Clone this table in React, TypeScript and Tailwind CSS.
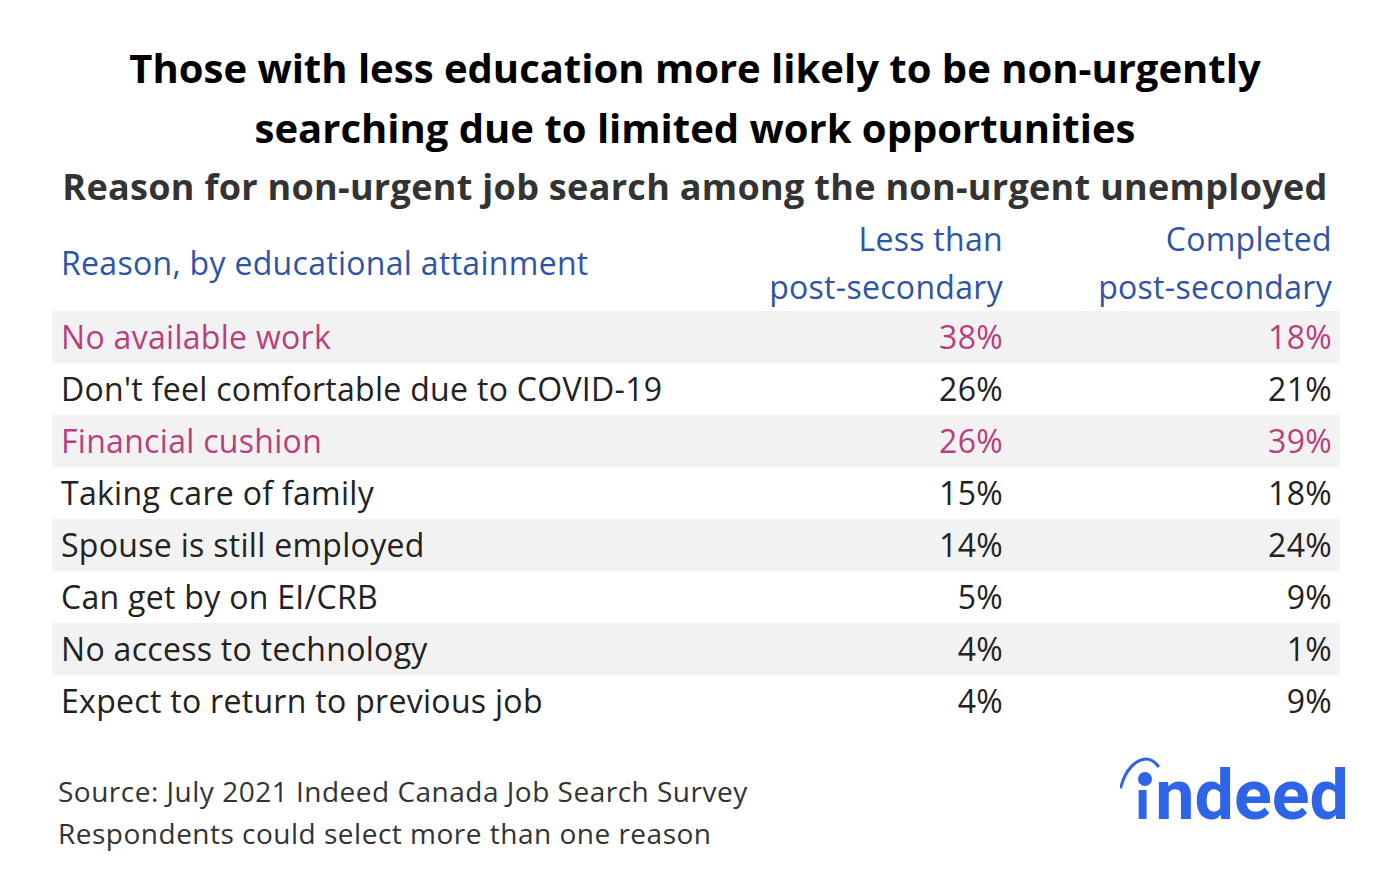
import React from "react";

const rows = [
  { label: "No available work", a: "38%", b: "18%", pink: true },
  { label: "Don't feel comfortable due to COVID-19", a: "26%", b: "21%" },
  { label: "Financial cushion", a: "26%", b: "39%", pink: true },
  { label: "Taking care of family", a: "15%", b: "18%" },
  { label: "Spouse is still employed", a: "14%", b: "24%" },
  { label: "Can get by on EI/CRB", a: "5%", b: "9%" },
  { label: "No access to technology", a: "4%", b: "1%" },
  { label: "Expect to return to previous job", a: "4%", b: "9%" },
];

// indeed wordmark: text letters plus the arc and dot drawn on top
const IndeedLogo = () => (
  <div className="relative h-[66px] w-[225px]">
    <svg className="absolute left-0 top-0" width="50" height="40" viewBox="0 0 50 40">
      <path d="M1 33 C5 16 16 5 26 5 C31 5 35 8 38 12" fill="none" stroke="#2d64e8" strokeWidth="3" strokeLinecap="round" />
      <circle cx="25" cy="25" r="7" fill="#2d64e8" />
    </svg>
    <div className="absolute bottom-[-10px] left-[15px] flex items-baseline font-['Roboto',sans-serif] font-bold leading-none text-[#2d64e8]">
      <span className="text-[56px]">ı</span>
      <span className="ml-[5px] text-[70px]">ndeed</span>
    </div>
  </div>
);

export default function App() {
  return (
    <div className="h-[872px] w-[1390px] bg-white font-['Open_Sans',sans-serif]">
      <div className="pt-[38px] text-center">
        <h1 className="text-[40px] font-bold leading-[60px] text-black">
          Those with less education more likely to be non-urgently
          <br />
          searching due to limited work opportunities
        </h1>
        <h2 className="mt-[5px] text-[36px] font-bold leading-[48px] tracking-[0.3px] text-[#333333]">
          Reason for non-urgent job search among the non-urgent unemployed
        </h2>
      </div>

      <div className="mx-[52px] mt-[4px] w-[1288px] text-[32px] tracking-[0.3px]">
        <div className="grid grid-cols-[630px_329px_329px] items-center text-[#2e55a5] leading-[48px]">
          <div className="pl-[9px]">Reason, by educational attainment</div>
          <div className="pr-[8px] text-right">
            Less than
            <br />
            post-secondary
          </div>
          <div className="pr-[8px] text-right">
            Completed
            <br />
            post-secondary
          </div>
        </div>
        {rows.map((r, i) => (
          <div
            key={i}
            className={`grid h-[52px] grid-cols-[630px_329px_329px] items-center ${
              i % 2 === 0 ? "bg-[#f2f2f2]" : "bg-white"
            } ${r.pink ? "text-[#b9407f]" : "text-[#222222]"}`}
          >
            <div className="pl-[9px]">{r.label}</div>
            <div className="pr-[8px] text-right">{r.a}</div>
            <div className="pr-[8px] text-right">{r.b}</div>
          </div>
        ))}
      </div>

      <div className="mx-[58px] mt-[43px] flex items-start justify-between">
        <div className="text-[28px] leading-[42px] tracking-[0.5px] text-[#333333]">
          <div>Source: July 2021 Indeed Canada Job Search Survey</div>
          <div>Respondents could select more than one reason</div>
        </div>
        <div className="mr-[-13px] mt-[-16px]">
          <IndeedLogo />
        </div>
      </div>
    </div>
  );
}
